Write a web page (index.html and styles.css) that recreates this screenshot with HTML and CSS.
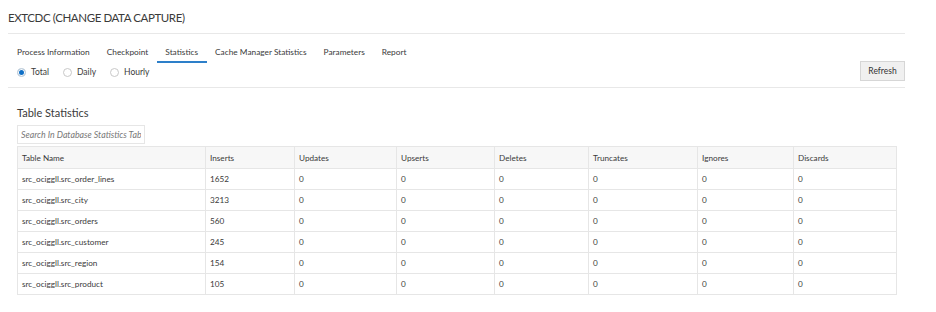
FILE: index.html
```html
<html>
  <head>
    <title>EXTCDC</title>
    <link rel="stylesheet" href="styles.css">
  </head>
  <body>
    <div id="page">
      <div class="title">EXTCDC (CHANGE DATA CAPTURE)</div>
      <div class="toolbar">
        <div class="left">
          <div class="tabs">
            <span class="tab">Process Information</span>
            <span class="tab">Checkpoint</span>
            <span class="tab active">Statistics</span>
            <span class="tab">Cache Manager Statistics</span>
            <span class="tab">Parameters</span>
            <span class="tab">Report</span>
          </div>
          <div class="radios">
            <label class="radio"><span class="dot on"></span>Total</label>
            <label class="radio"><span class="dot"></span>Daily</label>
            <label class="radio"><span class="dot"></span>Hourly</label>
          </div>
        </div>
        <button class="refresh">Refresh</button>
      </div>
      <div class="content">
        <div class="subtitle">Table Statistics</div>
        <input class="search" type="text" placeholder="Search In Database Statistics Table">
        <table>
          <colgroup>
            <col style="width:188px"><col style="width:89px"><col style="width:102px"><col style="width:98px">
            <col style="width:94px"><col style="width:109px"><col style="width:96px"><col style="width:103px">
          </colgroup>
          <thead>
            <tr><th>Table Name</th><th>Inserts</th><th>Updates</th><th>Upserts</th><th>Deletes</th><th>Truncates</th><th>Ignores</th><th>Discards</th></tr>
          </thead>
          <tbody>
            <tr><td>src_ociggll.src_order_lines</td><td>1652</td><td>0</td><td>0</td><td>0</td><td>0</td><td>0</td><td>0</td></tr>
            <tr><td>src_ociggll.src_city</td><td>3213</td><td>0</td><td>0</td><td>0</td><td>0</td><td>0</td><td>0</td></tr>
            <tr><td>src_ociggll.src_orders</td><td>560</td><td>0</td><td>0</td><td>0</td><td>0</td><td>0</td><td>0</td></tr>
            <tr><td>src_ociggll.src_customer</td><td>245</td><td>0</td><td>0</td><td>0</td><td>0</td><td>0</td><td>0</td></tr>
            <tr><td>src_ociggll.src_region</td><td>154</td><td>0</td><td>0</td><td>0</td><td>0</td><td>0</td><td>0</td></tr>
            <tr><td>src_ociggll.src_product</td><td>105</td><td>0</td><td>0</td><td>0</td><td>0</td><td>0</td><td>0</td></tr>
          </tbody>
        </table>
      </div>
    </div>
  </body>
</html>
```
FILE: styles.css
```css
body{
  margin:0;
  background:white;
  font-family:Lato,"Noto Sans",sans-serif;
  color:#3a3a3a;
}

#page{
  margin-left:8px;
  width:897px;
}

.title{
  height:34px;
  box-sizing:border-box;
  padding-top:10px;
  font-size:11.5px;
  letter-spacing:-0.4px;
  line-height:16px;
  border-bottom:1px solid #e8e8e8;
}

.toolbar{
  display:flex;
  justify-content:space-between;
  align-items:flex-start;
  height:54px;
  box-sizing:border-box;
  padding-top:11px;
  border-bottom:1px solid #e8e8e8;
}

.tabs{
  display:flex;
}

.tab{
  padding:0 8.5px;
  height:16px;
  font-size:8.3px;
  line-height:15px;
  border-bottom:2px solid transparent;
}

.tab:first-child{
  padding-left:9px;
}

.tab.active{
  border-bottom-color:#2d7fc9;
}

.radios{
  display:flex;
  gap:14px;
  margin-top:3px;
  padding-left:9px;
}

.radio{
  display:flex;
  align-items:center;
  gap:5px;
  font-size:8.5px;
  line-height:12px;
}

.dot{
  width:9px;
  height:9px;
  box-sizing:border-box;
  border:1px solid #c8c8c8;
  border-radius:50%;
  background:white;
}

.dot.on{
  border:1.5px solid #ddd;
  background:#0f6fc6;
  box-shadow:inset 0 0 0 1px white;
}

.refresh{
  margin-top:16px;
  width:45px;
  height:20px;
  padding:0;
  font-family:inherit;
  font-size:8.5px;
  color:#333;
  background:#f0f0f0;
  border:1px solid #d6d6d6;
}

.content{
  padding-left:9px;
}

.subtitle{
  margin-top:17px;
  font-size:11px;
  line-height:16px;
}

.search{
  display:block;
  margin-top:4px;
  width:128px;
  height:19px;
  box-sizing:border-box;
  padding:0 3px;
  font-family:inherit;
  font-size:8.8px;
  font-style:italic;
  border:1px solid #e6e6e6;
  outline:none;
}

.search::placeholder{
  color:#777;
}

table{
  margin-top:2px;
  border-collapse:collapse;
  table-layout:fixed;
  width:879px;
  font-size:8.2px;
}

th,td{
  height:21px;
  padding:0 4px;
  text-align:left;
  font-weight:normal;
  border:1px solid #e6e6e6;
  white-space:nowrap;
  overflow:hidden;
}

th{
  height:22px;
  background:#f7f7f7;
}
```
